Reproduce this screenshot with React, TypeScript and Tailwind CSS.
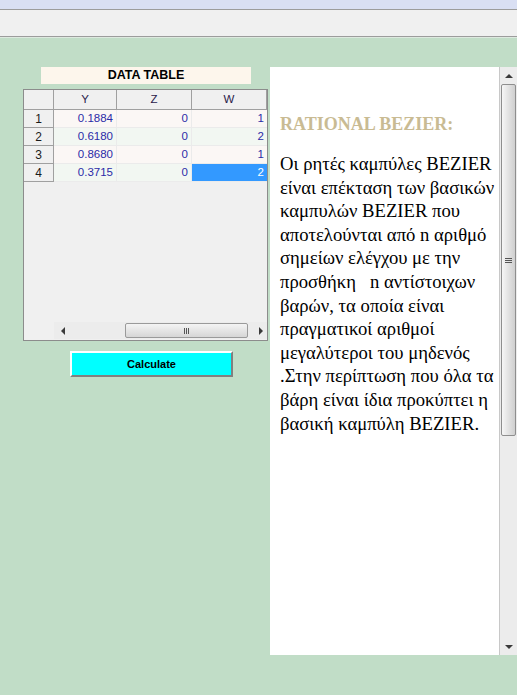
import React from "react";

const rows = [
  { n: 1, y: "0.1884", z: "0", w: "1" },
  { n: 2, y: "0.6180", z: "0", w: "2" },
  { n: 3, y: "0.8680", z: "0", w: "1" },
  { n: 4, y: "0.3715", z: "0", w: "2" },
];

function Arrow({ dir }: { dir: "up" | "down" | "left" | "right" }) {
  const pts = {
    up: "0,4 4,0 8,4",
    down: "0,0 8,0 4,4",
    left: "4,0 4,8 0,4",
    right: "0,0 0,8 4,4",
  }[dir];
  const vert = dir === "up" || dir === "down";
  return (
    <svg width={vert ? 8 : 4} height={vert ? 4 : 8} viewBox={vert ? "0 0 8 4" : "0 0 4 8"}>
      <polygon points={pts} fill="#3a3a3a" />
    </svg>
  );
}

function DataGrid() {
  return (
    <div className="w-[245px] h-[252px] border border-[#8c8c8c] bg-[#f0f0f0] flex flex-col font-['Liberation_Sans',Arial,sans-serif] text-[11.5px]">
      {/* header */}
      <div className="flex h-[20px]">
        <div className="w-[30px] border-r border-b border-[#a0a0a0] bg-[#f0f0f0]" />
        {["Y", "Z", "W"].map((h, i) => (
          <div
            key={h}
            className={`${i === 0 ? "w-[63px]" : "w-[75px]"} border-r border-b border-[#a0a0a0] bg-[#f0f0f0] flex items-center justify-center text-[#2a1a4a]`}
          >
            {h}
          </div>
        ))}
      </div>
      {rows.map((r) => {
        const bg = r.n % 2 ? "bg-[#fbf7f5]" : "bg-[#f2f7f2]";
        return (
          <div key={r.n} className="flex h-[18px]">
            <div className="w-[30px] border-r border-b border-[#a0a0a0] flex items-center justify-center text-[12px] text-[#1a1a1a]">
              {r.n}
            </div>
            <div className={`w-[63px] border-r border-b border-[#ebebeb] ${bg} flex items-center justify-end pr-[3px] text-[#2b2ba8]`}>
              {r.y}
            </div>
            <div className={`w-[75px] border-r border-b border-[#ebebeb] ${bg} flex items-center justify-end pr-[3px] text-[#2b2ba8]`}>
              {r.z}
            </div>
            <div
              className={`w-[75px] border-b border-[#ebebeb] flex items-center justify-end pr-[3px] ${
                r.n === 4 ? "bg-[#3399ff] text-white" : `${bg} text-[#2b2ba8]`
              }`}
            >
              {r.w}
            </div>
          </div>
        );
      })}
      <div className="flex-1" />
      {/* horizontal scrollbar */}
      <div className="flex h-[17px] mb-px">
        <div className="w-[30px]" />
        <div className="flex-1 flex items-center bg-[#ececec]">
          <div className="w-[14px] flex items-center justify-center ml-[2px]">
            <Arrow dir="left" />
          </div>
          <div className="flex-1 flex h-full py-px pl-[55px] pr-[7px]">
            <div className="flex-1 rounded-[2px] border border-[#9a9a9a] bg-gradient-to-b from-[#f4f4f4] to-[#d6d6d6] flex items-center justify-center">
              <div className="flex gap-px">
                <div className="w-px h-[6px] bg-[#555]" />
                <div className="w-px h-[6px] bg-[#555]" />
                <div className="w-px h-[6px] bg-[#555]" />
              </div>
            </div>
          </div>
          <div className="w-[12px] flex items-center justify-center">
            <Arrow dir="right" />
          </div>
        </div>
      </div>
    </div>
  );
}

export default function App() {
  return (
    <div className="w-[517px] h-[695px] bg-[#c1ddc7] flex flex-col overflow-hidden">
      {/* window chrome */}
      <div className="h-[9px] bg-[#d9dff3]" />
      <div className="h-[28px] bg-[#f0f0f0] border-y border-[#9c9c9c]" />
      <div className="h-px bg-[#dde9df]" />

      <div className="flex flex-1 pt-[29px]">
        {/* left column */}
        <div className="w-[270px] pl-[23px] flex flex-col">
          <div className="ml-[18px] w-[210px] h-[17px] bg-[#fdf6ec] flex items-center justify-center font-['Liberation_Sans',Arial,sans-serif] font-bold text-[12.5px] text-black">
            DATA TABLE
          </div>
          <div className="mt-[5px]">
            <DataGrid />
          </div>
          <button className="mt-[10px] ml-[47px] w-[163px] h-[26px] bg-[#00ffff] border-2 border-t-white border-l-white border-r-[#808080] border-b-[#808080] font-['Liberation_Sans',Arial,sans-serif] font-bold text-[11px] text-black">
            Calculate
          </button>
        </div>

        {/* right text panel */}
        <div className="w-[247px] h-[588px] bg-white flex">
          <div className="flex-1 pl-[10px] pr-[4px] pt-[46px] font-['Liberation_Serif','Times_New_Roman',serif]">
            <div className="font-bold text-[18px] text-[#c9bb93] leading-[22px]">RATIONAL BEZIER:</div>
            <p className="mt-[17px] text-[18.67px] leading-[23.6px] text-black">
              Οι ρητές καμπύλες BEZIER είναι επέκταση των βασικών καμπυλών BEZIER που αποτελούνται από n αριθμό σημείων ελέγχου με την προσθήκη &nbsp; n αντίστοιχων βαρών, τα οποία είναι πραγματικοί αριθμοί μεγαλύτεροι του μηδενός .Στην περίπτωση που όλα τα βάρη είναι ίδια προκύπτει η βασική καμπύλη BEZIER.
            </p>
          </div>
          {/* vertical scrollbar */}
          <div className="w-[18px] border-l border-[#c8c8c8] bg-[#ececec] flex flex-col">
            <div className="h-[17px] flex items-center justify-center">
              <Arrow dir="up" />
            </div>
            <div className="h-[352px] mx-px rounded-[2px] border border-[#8e8e8e] bg-gradient-to-r from-[#f6f6f6] via-[#e2e2e2] to-[#cfcfcf] flex items-center justify-center">
              <div className="flex flex-col gap-px">
                <div className="w-[7px] h-px bg-[#555]" />
                <div className="w-[7px] h-px bg-[#555]" />
                <div className="w-[7px] h-px bg-[#555]" />
              </div>
            </div>
            <div className="flex-1" />
            <div className="h-[17px] flex items-center justify-center">
              <Arrow dir="down" />
            </div>
          </div>
        </div>
      </div>
    </div>
  );
}
